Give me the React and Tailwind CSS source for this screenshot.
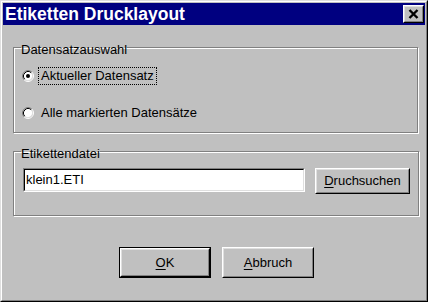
import React from "react";

const font = { fontFamily: '"Liberation Sans", Arial, sans-serif' };

function Raised({ className = "", innerClassName = "", children }) {
  return (
    <div
      className={`border border-t-white border-l-white border-r-black border-b-black ${className}`}
    >
      <div
        className={`w-full h-full border border-t-[#dfdfdf] border-l-[#dfdfdf] border-r-[#808080] border-b-[#808080] bg-[#c0c0c0] flex items-center justify-center ${innerClassName}`}
      >
        {children}
      </div>
    </div>
  );
}

function Radio({ checked }) {
  return (
    <svg width="12" height="12" viewBox="0 0 12 12" className="shrink-0">
      <circle cx="6" cy="6" r="4.5" fill="white" />
      <path d="M2.11 9.89 A5.5 5.5 0 0 1 9.89 2.11" stroke="#808080" fill="none" />
      <path d="M9.89 2.11 A5.5 5.5 0 0 1 2.11 9.89" stroke="#ffffff" fill="none" />
      <path d="M2.82 9.18 A4.5 4.5 0 0 1 9.18 2.82" stroke="#000000" fill="none" />
      <path d="M9.18 2.82 A4.5 4.5 0 0 1 2.82 9.18" stroke="#dfdfdf" fill="none" />
      {checked && <circle cx="6" cy="6" r="2" fill="black" />}
    </svg>
  );
}

function Group({ label, className = "", children }) {
  return (
    <fieldset
      className={`ml-[10px] w-[405px] border border-[#808080] px-[8px] shadow-[inset_1px_1px_0_#ffffff,1px_1px_0_#ffffff] ${className}`}
    >
      <legend className="-ml-px pt-[5px] px-0 leading-[15px] text-[13px] text-black">
        {label}
      </legend>
      {children}
    </fieldset>
  );
}

export default function App() {
  return (
    <div
      style={font}
      className="w-[428px] h-[302px] bg-[#c0c0c0] border border-t-[#dfdfdf] border-l-[#dfdfdf] border-r-black border-b-black"
    >
      <div className="w-full h-full border border-t-white border-l-white border-r-[#808080] border-b-[#808080] p-px">
        {/* title bar */}
        <div className="h-[22px] bg-[#000080] flex items-center justify-between pl-[2px] pr-[1px]">
          <span className="text-white font-bold text-[17.5px] leading-[22px]">
            Etiketten Drucklayout
          </span>
          <Raised className="w-[21px] h-[18px]">
            <svg width="11" height="10" viewBox="0 0 11 10">
              <path
                d="M1.5 1 L9.5 9 M9.5 1 L1.5 9"
                stroke="black"
                strokeWidth="2.4"
              />
            </svg>
          </Raised>
        </div>

        <Group label="Datensatzauswahl" className="mt-[12px] pt-[10px] pb-[10px]">
          <div className="h-[18px] flex items-center text-[13px] text-black">
            <Radio checked />
            <span className="ml-[4px] px-[2px] h-[18px] leading-[16px] border border-dotted border-black">
              Aktueller Datensatz
            </span>
          </div>
          <div className="mt-[19px] h-[18px] flex items-center text-[13px] text-black">
            <Radio />
            <span className="ml-[5px] px-[2px] leading-[16px]">
              Alle markierten Datensätze
            </span>
          </div>
        </Group>

        <Group label="Etikettendatei" className="mt-[8px] pt-[7px] pb-[21px]">
          <div className="flex items-start gap-[10px]">
            <div className="ml-px w-[282px] h-[24px] border border-t-[#808080] border-l-[#808080] border-r-white border-b-white">
              <div className="w-full h-full bg-white border border-t-black border-l-black border-r-[#dfdfdf] border-b-[#dfdfdf] flex items-center pl-px text-[13px] text-black">
                klein1.ETI
              </div>
            </div>
            <Raised className="w-[95px] h-[26px]">
              <span className="text-[13px] text-black">
                <span className="underline underline-offset-2">D</span>ruchsuchen
              </span>
            </Raised>
          </div>
        </Group>

        <div className="mt-[31px] pl-[116px] flex gap-[11px]">
          <div className="w-[92px] h-[31px] border border-black">
            <Raised className="w-full h-full">
              <span className="text-[13px] text-black">
                <span className="underline underline-offset-2">O</span>K
              </span>
            </Raised>
          </div>
          <Raised className="w-[92px] h-[31px]">
            <span className="text-[13px] text-black">
              <span className="underline underline-offset-2">A</span>bbruch
            </span>
          </Raised>
        </div>
      </div>
    </div>
  );
}
